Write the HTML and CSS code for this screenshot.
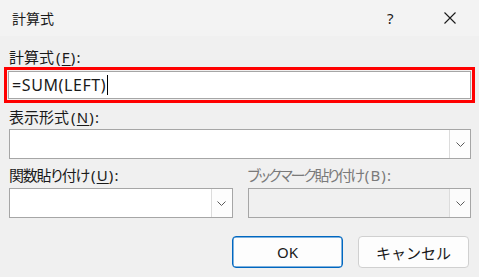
FILE: index.html
```html
<!DOCTYPE html>
<html lang="ja">
<head>
<meta charset="utf-8">
<title>計算式</title>
<link rel="stylesheet" href="styles.css">
</head>
<body>
<div class="dialog">
  <div class="titlebar">
    <span class="title">計算式</span>
    <div class="title-actions">
      <span class="help">?</span>
      <svg class="close" width="12" height="12" viewBox="0 0 12 12"><path d="M0.5 0.5 L11.5 11.5 M11.5 0.5 L0.5 11.5" stroke="#1a1a1a" stroke-width="1.1" fill="none"/></svg>
    </div>
  </div>
  <div class="content">
    <div class="label l1">計算式<span class="lat">(<u>F</u>):</span></div>
    <div class="highlight">
      <div class="input"><span class="formula">=SUM(LEFT)</span><span class="caret"></span></div>
    </div>
    <div class="label l2">表示形式<span class="lat">(<u>N</u>):</span></div>
    <div class="combo full">
      <div class="combo-field"></div>
      <div class="combo-btn"><svg width="9" height="5" viewBox="0 0 9 5"><path d="M0.5 0.5 L4.5 4.5 L8.5 0.5" stroke="#5a5a5a" fill="none" stroke-width="1"/></svg></div>
    </div>
    <div class="row">
      <div class="col">
        <div class="label l3 tight">関数貼り付け<span class="lat">(<u>U</u>):</span></div>
        <div class="combo">
          <div class="combo-field"></div>
          <div class="combo-btn"><svg width="9" height="5" viewBox="0 0 9 5"><path d="M0.5 0.5 L4.5 4.5 L8.5 0.5" stroke="#5a5a5a" fill="none" stroke-width="1"/></svg></div>
        </div>
      </div>
      <div class="col">
        <div class="label l3 tighter disabled">ブックマーク貼り付け<span class="lat">(B):</span></div>
        <div class="combo off">
          <div class="combo-field"></div>
          <div class="combo-btn"><svg width="9" height="5" viewBox="0 0 9 5"><path d="M0.5 0.5 L4.5 4.5 L8.5 0.5" stroke="#5a5a5a" fill="none" stroke-width="1"/></svg></div>
        </div>
      </div>
    </div>
    <div class="buttons">
      <button class="btn primary">OK</button>
      <button class="btn">キャンセル</button>
    </div>
  </div>
</div>
</body>
</html>
```
FILE: styles.css
```css
html, body {
  margin: 0;
  padding: 0;
  background: #f0f0f0;
}
body {
  width: 479px;
  height: 277px;
  overflow: hidden;
  font-family: "Noto Sans", "Noto Sans CJK JP", sans-serif;
  color: #1a1a1a;
}
.dialog {
  display: flex;
  flex-direction: column;
}
.titlebar {
  height: 36px;
  background: #f3f3f3;
  display: flex;
  align-items: center;
  justify-content: space-between;
  padding-left: 12px;
}
.title {
  font-size: 14px;
  font-family: "Noto Sans CJK JP", sans-serif;
  color: #1a1a1a;
}
.title-actions {
  display: flex;
  align-items: center;
}
.help {
  font-size: 15px;
  width: 8px;
  margin-right: 49px;
  color: #1a1a1a;
}
.close {
  margin-right: 23px;
  display: block;
}
.content {
  display: flex;
  flex-direction: column;
  padding: 0 8px 0 9px;
}
.label {
  font-size: 15px;
  line-height: 20px;
  height: 20px;
  white-space: nowrap;
  font-feature-settings: "palt";
}
.tight { letter-spacing: -1.2px; }
.tighter { letter-spacing: -2.2px; }
.lat {
  letter-spacing: 1.2px;
  padding-left: 2px;
}
.label u {
  text-underline-offset: 2px;
}
.l1 { margin-top: 11px; }
.l2 { margin-top: 4px; margin-bottom: 2px; }
.l3 { margin-top: 6px; margin-bottom: 3px; }
.disabled { color: #7a7a7a; }
.highlight {
  margin: 0 -4px 0 -5px;
  border: 3px solid #ff0000;
  padding: 1px;
}
.input {
  height: 26px;
  border: 1px solid #a6a6a6;
  background: #ffffff;
  display: flex;
  align-items: center;
  padding-left: 3px;
}
.formula {
  font-size: 16px;
  letter-spacing: 0.6px;
  color: #1a1a1a;
}
.caret {
  width: 1px;
  height: 20px;
  background: #000;
  margin-left: 1px;
}
.combo {
  height: 28px;
  border: 1px solid #a6a6a6;
  background: #ffffff;
  display: flex;
}
.combo-field { flex: 1; }
.combo-btn {
  width: 20px;
  border-left: 1px solid #dcdcdc;
  background: #fdfdfd;
  display: flex;
  align-items: center;
  justify-content: center;
}
.combo-btn svg { display: block; }
.combo.off { background: #f0f0f0; }
.combo.off .combo-btn { background: #fbfbfb; }
.row {
  display: grid;
  grid-template-columns: 1fr 1fr;
  column-gap: 15px;
}
.col {
  display: flex;
  flex-direction: column;
}
.buttons {
  display: flex;
  justify-content: flex-end;
  gap: 15px;
  margin-top: 18px;
  margin-right: 2px;
}
.btn {
  width: 111px;
  height: 32px;
  border: 1px solid #d0d0d0;
  border-radius: 4px;
  background: #fdfdfd;
  font-family: "Noto Sans", "Noto Sans CJK JP", sans-serif;
  font-size: 15px;
  color: #1a1a1a;
  padding: 0;
}
.btn.primary {
  border: 1px solid #0067c0;
  box-shadow: inset 0 0 0 0.5px #0067c0;
}
```
